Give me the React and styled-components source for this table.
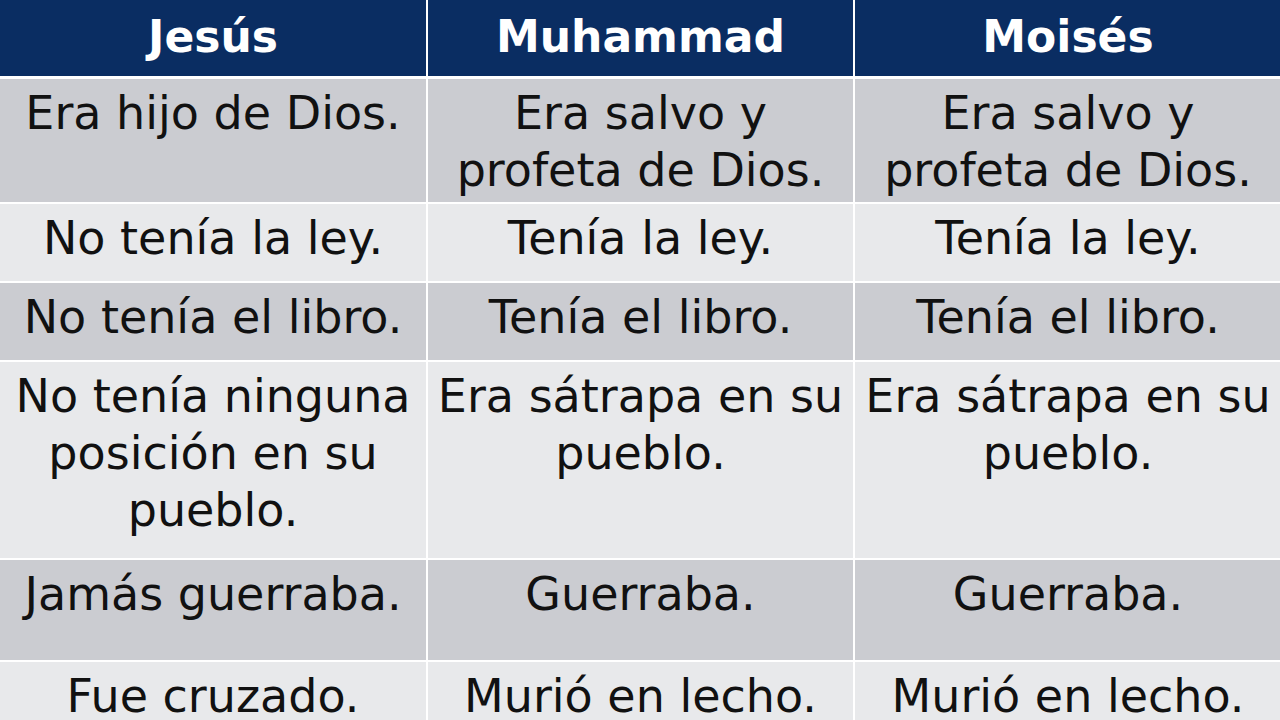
import styled, { createGlobalStyle } from "styled-components";

const Global = createGlobalStyle`
    html, body {
        margin: 0;
        padding: 0;
        background: #ffffff;
        overflow: hidden;
    }
`

const Slide = styled.div`
    width: 1280px;
    height: 720px;
    overflow: hidden;
    background: #ffffff;
`

const Table = styled.div`
    display: grid;
    grid-template-columns: 426px 425px 426px;
    grid-template-rows: 77px 123px 77px 77px 196px 100px 120px;
    column-gap: 2px;
    row-gap: 2px;
    font-family: "DejaVu Sans", "Liberation Sans", sans-serif;
`

const Head = styled.div`
    background: #0a2d62;
    color: #ffffff;
    font-weight: bold;
    font-size: 44px;
    display: flex;
    align-items: center;
    justify-content: center;
    padding-bottom: 3px;
    margin-bottom: 1px;
`

const Cell = styled.div`
    background: ${(p) => (p.$odd ? "#cbccd1" : "#e8e9eb")};
    color: #111111;
    font-size: 46px;
    line-height: 57px;
    text-align: center;
    white-space: nowrap;
    padding: 6px 0 0;
`

const rows = [
    ["Era hijo de Dios.", "Era salvo y\nprofeta de Dios.", "Era salvo y\nprofeta de Dios."],
    ["No tenía la ley.", "Tenía la ley.", "Tenía la ley."],
    ["No tenía el libro.", "Tenía el libro.", "Tenía el libro."],
    ["No tenía ninguna\nposición en su\npueblo.", "Era sátrapa en su\npueblo.", "Era sátrapa en su\npueblo."],
    ["Jamás guerraba.", "Guerraba.", "Guerraba."],
    ["Fue cruzado.", "Murió en lecho.", "Murió en lecho."],
];

export default function App() {
    return (
        <Slide>
            <Global />
            <Table>
                <Head>Jesús</Head>
                <Head>Muhammad</Head>
                <Head>Moisés</Head>
                {rows.map((row, i) =>
                    row.map((text, j) => (
                        <Cell key={`${i}-${j}`} $odd={i % 2 === 0}>
                            {text.split("\n").map((line, k) => (
                                <div key={k}>{line}</div>
                            ))}
                        </Cell>
                    ))
                )}
            </Table>
        </Slide>
    );
}
